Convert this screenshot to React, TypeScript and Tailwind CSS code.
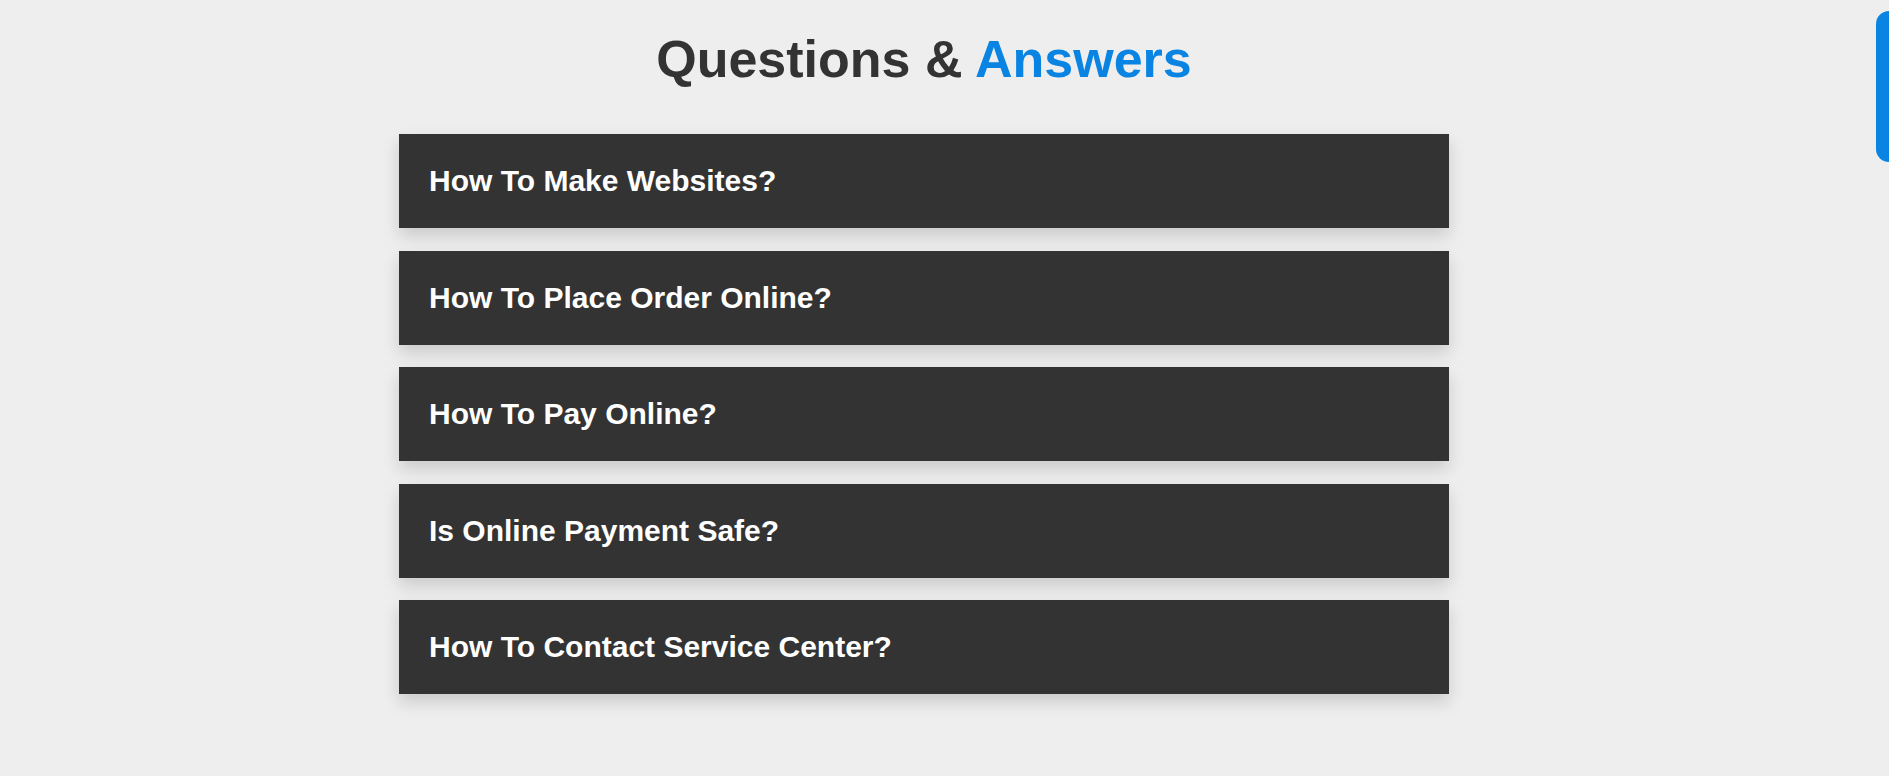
const questions = [
  "How To Make Websites?",
  "How To Place Order Online?",
  "How To Pay Online?",
  "Is Online Payment Safe?",
  "How To Contact Service Center?",
];

function Question({ text }: { text: string }) {
  return (
    <div className="bg-[#333] px-[30px] py-[32px] shadow-[0_8px_16px_rgba(0,0,0,0.15)]">
      <h3 className="text-[30px] font-bold leading-[30px] text-white">{text}</h3>
    </div>
  );
}

export default function App() {
  return (
    <div className="relative h-screen overflow-hidden bg-[#eee] font-['Liberation_Sans',Arial,sans-serif]">
      {/* scrollbar thumb */}
      <div className="absolute right-0 top-[11px] h-[151px] w-[13px] rounded-l-full rounded-r-none bg-[#0984e3]" />
      <section className="pr-[41px] pt-[33px]">
        <h1 className="text-center text-[52px] font-bold leading-[52px] text-[#333]">
          Questions & <span className="text-[#0984e3]">Answers</span>
        </h1>
        <div className="mx-auto mt-[49px] flex w-[1050px] flex-col gap-[22.5px]">
          {questions.map((q) => (
            <Question key={q} text={q} />
          ))}
        </div>
      </section>
    </div>
  );
}
